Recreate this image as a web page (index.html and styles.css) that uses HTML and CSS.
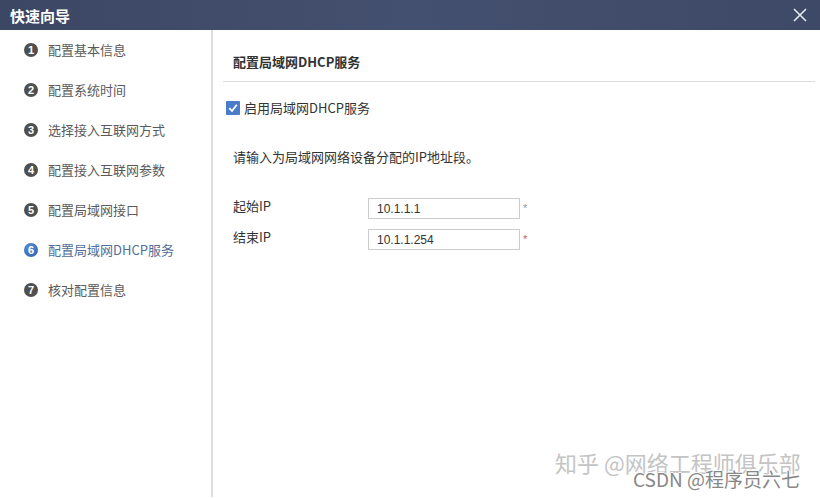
FILE: index.html
```html
<!DOCTYPE html>
<html lang="zh">
<head>
<meta charset="utf-8">
<title>快速向导</title>
<link rel="stylesheet" href="styles.css">
</head>
<body>
<div class="dialog">
  <div class="titlebar">
    <span class="title">快速向导</span>
    <svg class="close" width="14" height="14" viewBox="0 0 14 14"><path d="M1 1L13 13M13 1L1 13" stroke="#e4e8f0" stroke-width="1.6" fill="none"/></svg>
  </div>
  <div class="main">
    <ul class="steps">
      <li class="step"><span class="num">1</span><span>配置基本信息</span></li>
      <li class="step"><span class="num">2</span><span>配置系统时间</span></li>
      <li class="step"><span class="num">3</span><span>选择接入互联网方式</span></li>
      <li class="step"><span class="num">4</span><span>配置接入互联网参数</span></li>
      <li class="step"><span class="num">5</span><span>配置局域网接口</span></li>
      <li class="step active"><span class="num">6</span><span>配置局域网DHCP服务</span></li>
      <li class="step"><span class="num">7</span><span>核对配置信息</span></li>
    </ul>
    <div class="content">
      <div class="section-title">配置局域网DHCP服务</div>
      <label class="check-row">
        <span class="checkbox"><svg width="10" height="10" viewBox="0 0 10 10"><path d="M1.2 5.2L4 8L8.8 1.8" stroke="#fff" stroke-width="1.8" fill="none"/></svg></span>
        <span>启用局域网DHCP服务</span>
      </label>
      <p class="desc">请输入为局域网网络设备分配的IP地址段。</p>
      <div class="form">
        <div class="row">
          <span class="label">起始IP</span>
          <span class="input">10.1.1.1</span>
          <span class="req gray">*</span>
        </div>
        <div class="row">
          <span class="label">结束IP</span>
          <span class="input">10.1.1.254</span>
          <span class="req">*</span>
        </div>
      </div>
    </div>
  </div>
  <div class="wm wm1">知乎 @网络工程师俱乐部</div>
  <div class="wm wm2">CSDN @程序员六七</div>
</div>
</body>
</html>
```
FILE: styles.css
```css
html, body {
  margin: 0;
  padding: 0;
  background: #fff;
}
body {
  font-family: "Liberation Sans", Arial, "Noto Sans CJK SC", sans-serif;
  font-size: 13px;
  color: #333;
}
.dialog {
  position: relative;
  width: 820px;
  height: 498px;
  display: flex;
  flex-direction: column;
  overflow: hidden;
}
.titlebar {
  height: 30px;
  flex: none;
  background: linear-gradient(90deg, #3c4764 0%, #44506f 50%, #3e4967 100%);
  display: flex;
  align-items: center;
  justify-content: space-between;
  padding: 0 13px 0 10px;
}
.title {
  color: #fff;
  font-weight: bold;
  font-size: 15px;
  font-family: "Noto Sans CJK SC", sans-serif;
}
.close {
  display: block;
}
.main {
  flex: 1;
  display: flex;
  min-height: 0;
}
.steps {
  list-style: none;
  margin: 0;
  padding: 0;
  width: 211px;
  flex: none;
  border-right: 2px solid #dedede;
  height: 467px;
}
.step {
  height: 40px;
  display: flex;
  align-items: center;
  padding-left: 24px;
  gap: 10px;
  color: #5a5a5a;
  font-family: "Noto Sans CJK SC", sans-serif;
  font-size: 13px;
  line-height: 18px;
  padding-bottom: 1px;
  box-sizing: border-box;
}
.num {
  width: 14px;
  height: 14px;
  border-radius: 50%;
  background: #4f4f4f;
  color: #fff;
  font-family: "Liberation Sans", Arial, sans-serif;
  font-weight: bold;
  font-size: 11px;
  line-height: 14px;
  text-align: center;
  flex: none;
}
.step.active {
  color: #4f6e98;
}
.step.active .num {
  background: radial-gradient(circle at 40% 35%, #5c8fd6, #2a5aa8);
}
.content {
  flex: 1;
  padding: 0 5px 0 10px;
}
.section-title {
  padding: 22px 10px 9px;
  line-height: 20px;
  font-weight: bold;
  color: #333;
  border-bottom: 1px solid #dcdcdc;
  font-family: "Noto Sans CJK SC", sans-serif;
}
.check-row {
  margin-top: 16px;
  padding-left: 3px;
  display: flex;
  align-items: center;
  gap: 4px;
  line-height: 20px;
  font-family: "Noto Sans CJK SC", sans-serif;
}
.checkbox {
  width: 14px;
  height: 14px;
  background: #4a7ccb;
  border-radius: 1px;
  display: flex;
  align-items: center;
  justify-content: center;
}
.desc {
  margin: 29px 0 0;
  padding-left: 10px;
  line-height: 20px;
  font-family: "Noto Sans CJK SC", sans-serif;
}
.form {
  margin-top: 31px;
  padding-left: 10px;
  display: flex;
  flex-direction: column;
  gap: 10px;
}
.row {
  display: flex;
  align-items: flex-start;
  height: 21px;
}
.label {
  width: 135px;
  line-height: 15px;
  font-family: "Noto Sans CJK SC", sans-serif;
}
.input {
  width: 142px;
  height: 19px;
  border: 1px solid #cccccc;
  padding-left: 8px;
  line-height: 21px;
  font-size: 12px;
  color: #333;
}
.req {
  margin-left: 3px;
  font-size: 11px;
  line-height: 20px;
  color: #d05a5a;
}
.req.gray {
  color: #999;
}
.wm {
  position: absolute;
  font-family: "Noto Sans CJK SC", sans-serif;
  white-space: nowrap;
  pointer-events: none;
}
.wm1 {
  left: 555px;
  top: 448px;
  font-size: 22px;
  line-height: 28px;
  color: #c4c4c4;
  text-shadow: 0 0 1px #fff;
}
.wm2 {
  left: 633px;
  top: 467px;
  font-size: 19px;
  line-height: 24px;
  color: #888;
  text-shadow: -1px 0 #fff, 1px 0 #fff, 0 -1px #fff, 0 1px #fff;
}
```
